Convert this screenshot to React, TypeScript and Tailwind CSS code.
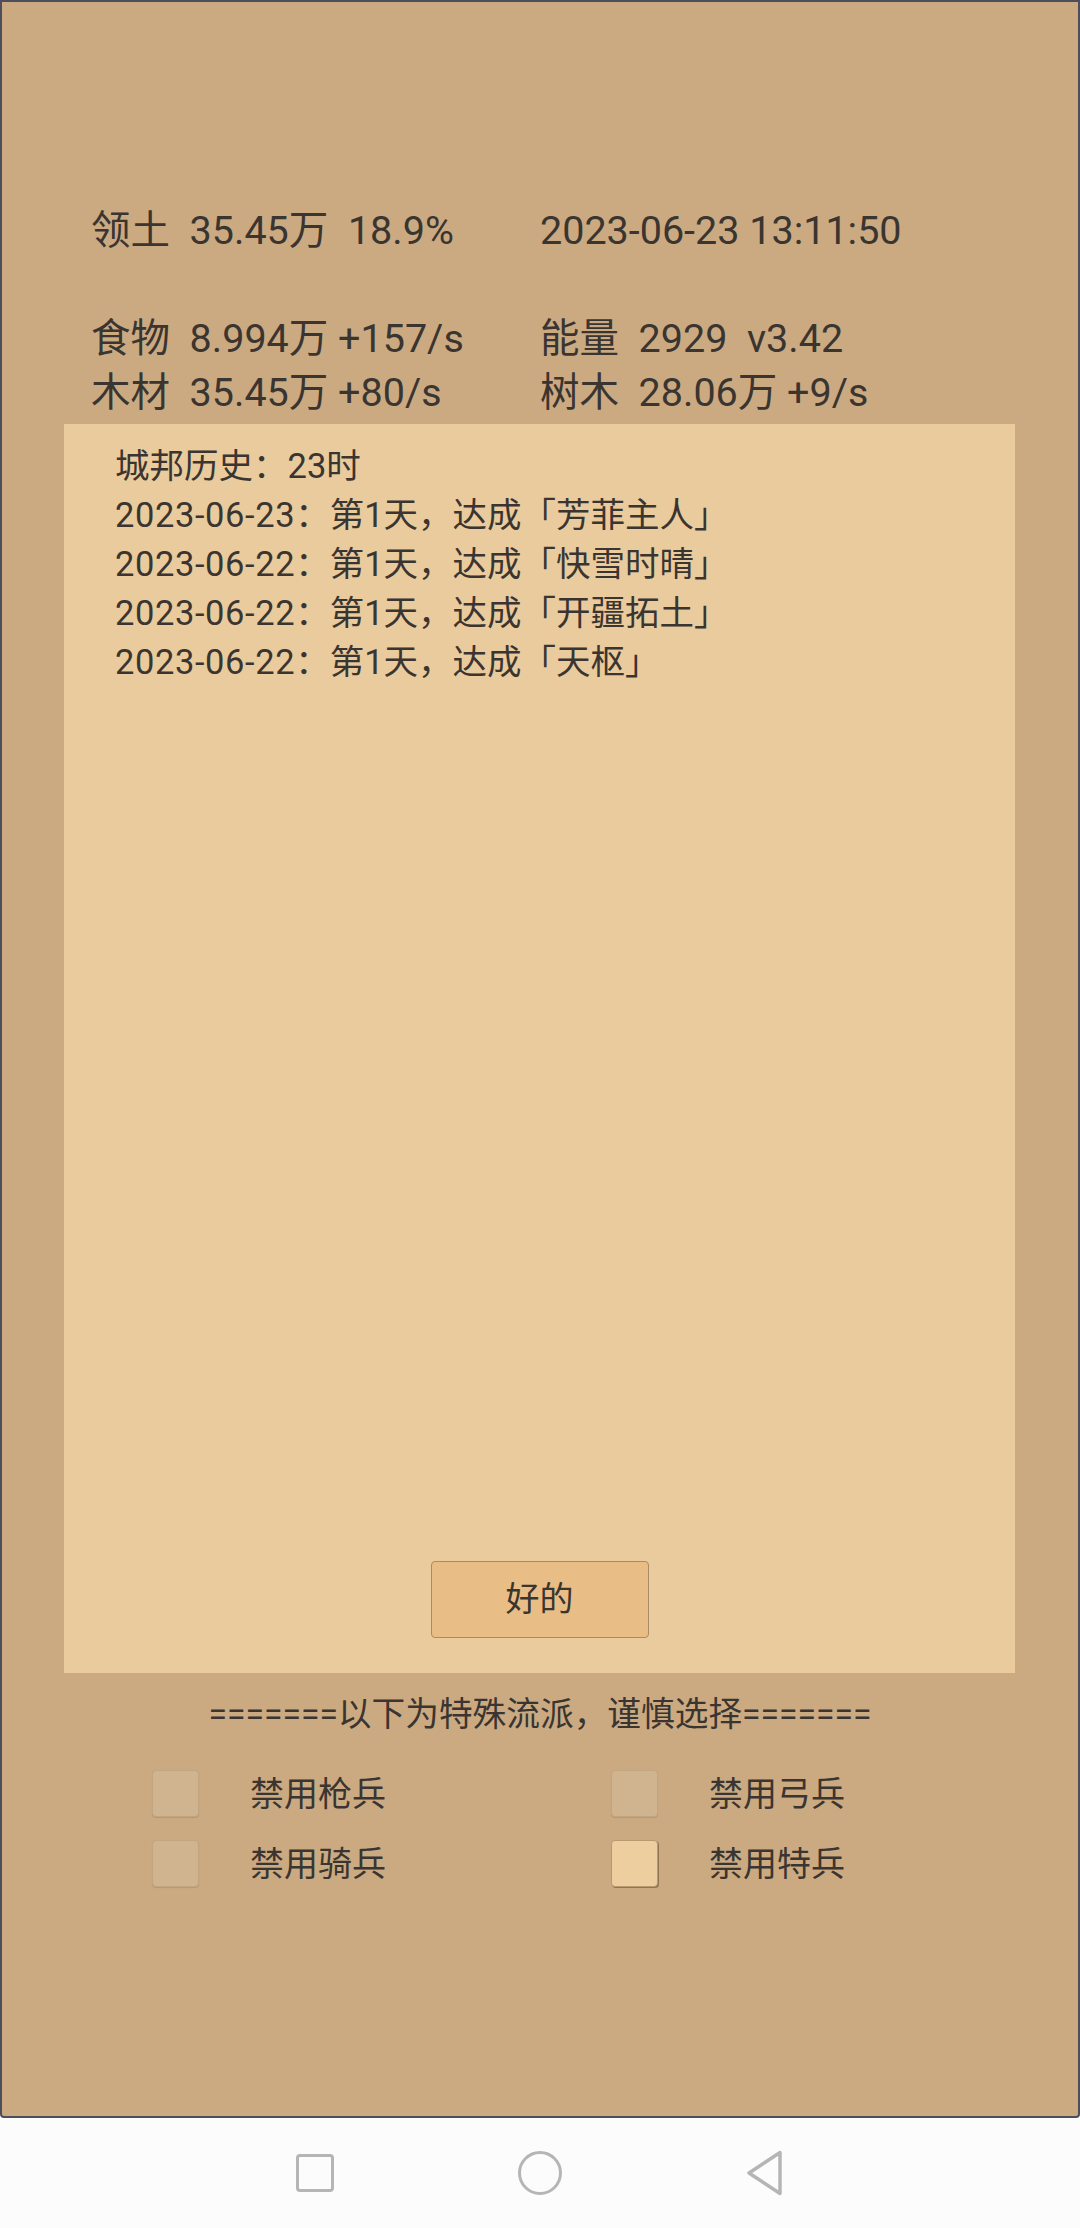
import React, { useState } from "react";

const STATS: [string, string][] = [
	["领土  35.45万  18.9%", "2023-06-23 13:11:50"],
	["食物  8.994万 +157/s", "能量  2929  v3.42"],
	["木材  35.45万 +80/s", "树木  28.06万 +9/s"],
];

const HISTORY: [string, string][] = [
	["城邦历史：", "23时"],
	["2023-06-23", "：第1天，达成「芳菲主人」"],
	["2023-06-22", "：第1天，达成「快雪时晴」"],
	["2023-06-22", "：第1天，达成「开疆拓土」"],
	["2023-06-22", "：第1天，达成「天枢」"],
];

const OPTIONS = ["禁用枪兵", "禁用弓兵", "禁用骑兵", "禁用特兵"];

function Option({ label, checked, onToggle }: { label: string; checked: boolean; onToggle: () => void }) {
	return (
		<div className="flex items-center h-[47px]">
			<button
				onClick={onToggle}
				className={`w-[47px] h-[47px] rounded-[4px] border ${
					checked
						? "bg-[#edcf9f] border-[#b8996f] shadow-[1px_1px_0_#8e7558]"
						: "bg-[#d0b48f] border-[#c2a581] shadow-[0_1px_1px_#b59874]"
				}`}
			/>
			<span className="ml-[51px] text-[34px] leading-[47px] pt-[2px]">{label}</span>
		</div>
	);
}

export default function App() {
	const [banned, setBanned] = useState<Record<string, boolean>>({ 禁用特兵: true });

	return (
		<div className="w-[1080px] h-[2228px] flex flex-col text-[#3a3530] font-[Roboto,'Noto_Sans_CJK_SC',sans-serif]">
			<div className="h-[2118px] bg-[#cbaa82] border-2 border-[#4c4f5b] rounded-b-[4px] flex flex-col">
				{/* resource stats */}
				<div className="pt-[202px] pl-[89px] text-[39.5px] leading-[54px] whitespace-pre">
					{STATS.map(([left, right], i) => (
						<div key={i} className={`grid grid-cols-[449px_1fr] ${i === 0 ? "mb-[54px]" : ""}`}>
							<span>{left}</span>
							<span>{right}</span>
						</div>
					))}
				</div>

				{/* history panel */}
				<div className="ml-[62px] mt-[4px] w-[951px] h-[1249px] bg-[#eacb9d] flex flex-col pt-[18px] pl-[51px]">
					{HISTORY.map(([head, rest], i) => (
						<div key={i} className="text-[34.5px] leading-[49px]">
							<span className={i === 0 ? "" : "tracking-[0.6px]"}>{head}</span>
							{rest}
						</div>
					))}
					<button className="mt-auto mb-[35px] -ml-[51px] self-center w-[218px] h-[77px] rounded-[4px] border border-[#a88b66] bg-[#e8be86] text-[34px]">
						好的
					</button>
				</div>

				<div className="mt-[17px] text-center text-[33.7px] leading-[50px]">=======以下为特殊流派，谨慎选择=======</div>

				<div className="mt-[30px] pl-[150px] grid grid-cols-[459px_1fr] gap-y-[23px]">
					{OPTIONS.map((o) => (
						<Option
							key={o}
							label={o}
							checked={!!banned[o]}
							onToggle={() => setBanned((b) => ({ ...b, [o]: !b[o] }))}
						/>
					))}
				</div>
			</div>

			{/* system navigation bar */}
			<div className="flex-1 bg-[#fcfcfc] flex items-center justify-center">
				<div className="w-[225px] flex justify-center">
					<div className="w-[38px] h-[38px] rounded-[4px] border-[3px] border-[#b5b5b5]" />
				</div>
				<div className="w-[225px] flex justify-center">
					<div className="w-[44px] h-[44px] rounded-full border-[3.5px] border-[#b5b5b5]" />
				</div>
				<div className="w-[225px] flex justify-center">
					<svg width="40" height="46" viewBox="0 0 40 46">
						<path
							d="M35 2.5 L35 43.5 L4 23 Z"
							fill="none"
							stroke="#b5b5b5"
							strokeWidth="3.5"
							strokeLinejoin="round"
						/>
					</svg>
				</div>
			</div>
		</div>
	);
}
